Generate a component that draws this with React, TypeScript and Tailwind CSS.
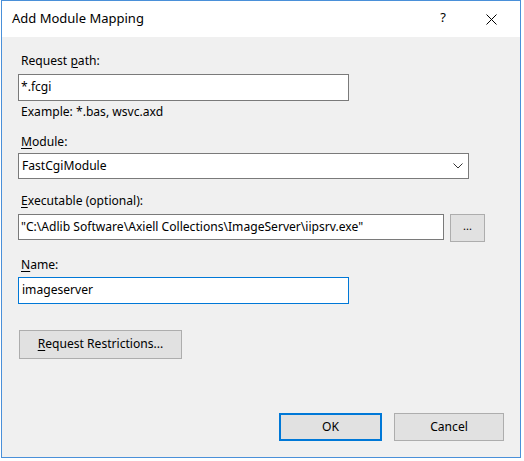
import React from "react";

const font = { fontFamily: '"Noto Sans", "Open Sans", sans-serif' };

function U({ children }: { children: React.ReactNode }) {
  return <span className="underline underline-offset-2 decoration-1">{children}</span>;
}

function Label({ children, className = "" }: { children: React.ReactNode; className?: string }) {
  return <div className={`pl-[3px] h-[16px] leading-[16px] text-[12.1px] text-black ${className}`}>{children}</div>;
}

export default function App() {
  return (
    <div className="w-[524px] h-[461px] bg-white overflow-hidden" style={font}>
      <div className="ml-[1px] w-[520px] h-[458px] border border-[#4a90d9] flex flex-col">
        {/* Title bar */}
        <div className="h-[36px] bg-white flex items-center shrink-0">
          <div className="pl-[10px] text-[13px] text-black flex-1 leading-none pb-[2px]">Add Module Mapping</div>
          <div className="w-[20px] text-center text-[13px] text-black mr-[33px] pb-[2px]">?</div>
          <svg width="11" height="11" viewBox="0 0 11 11" className="mr-[23px]">
            <path d="M0.5 0.5 L10.5 10.5 M10.5 0.5 L0.5 10.5" stroke="#000" strokeWidth="1" />
          </svg>
        </div>

        {/* Body */}
        <div className="flex-1 bg-[#f0f0f0] pl-[16px] pr-[16px] pt-[16px] flex flex-col">
          <Label>
            Request <U>p</U>ath:
          </Label>
          <div className="mt-[5px] w-[331px] h-[27px] bg-white border border-[#7a7a7a] flex items-center pl-[2px] text-[12.1px]">
            *.fcgi
          </div>
          <Label className="mt-[3px]">Example: *.bas, wsvc.axd</Label>

          <Label className="mt-[14px]">
            <U>M</U>odule:
          </Label>
          <div className="mt-[3px] w-[451px] h-[26px] bg-white border border-[#7a7a7a] flex items-center pl-[3px] text-[12.1px]">
            <span className="flex-1">FastCgiModule</span>
            <svg width="10" height="6" viewBox="0 0 10 6" className="mr-[5px]">
              <path d="M0.5 0.5 L5 5 L9.5 0.5" stroke="#333" strokeWidth="1" fill="none" />
            </svg>
          </div>

          <Label className="mt-[14px]">
            <U>E</U>xecutable (optional):
          </Label>
          <div className="mt-[5px] flex items-start">
            <div className="w-[426px] h-[26px] bg-white border border-[#7a7a7a] flex items-center pl-[2px] text-[12.1px] whitespace-nowrap overflow-hidden">
              "C:\Adlib Software\Axiell Collections\ImageServer\iipsrv.exe"
            </div>
            <div className="ml-[6px] w-[35px] h-[28px] bg-[#e1e1e1] border border-[#adadad] flex items-center justify-center text-[11px] pb-[3px]">
              ...
            </div>
          </div>

          <Label className="mt-[15px]">
            <U>N</U>ame:
          </Label>
          <div className="mt-[4px] w-[331px] h-[27px] bg-white border border-[#0078d7] flex items-center pl-[3px] text-[12.1px]">
            imageserver
          </div>

          <div className="mt-[26px] ml-[1px] w-[163px] h-[29px] bg-[#e1e1e1] border border-[#adadad] flex items-center justify-center text-[12.1px]">
            <span>
              <U>R</U>equest Restrictions...
            </span>
          </div>

          <div className="mt-[54px] flex justify-end gap-[12px]">
            <div className="w-[103px] h-[28px] bg-[#e1e1e1] border-2 border-[#0078d7] flex items-center justify-center text-[12.1px]">
              OK
            </div>
            <div className="w-[110px] h-[28px] bg-[#e1e1e1] border border-[#adadad] flex items-center justify-center text-[12.1px]">
              Cancel
            </div>
          </div>
        </div>
      </div>
    </div>
  );
}
